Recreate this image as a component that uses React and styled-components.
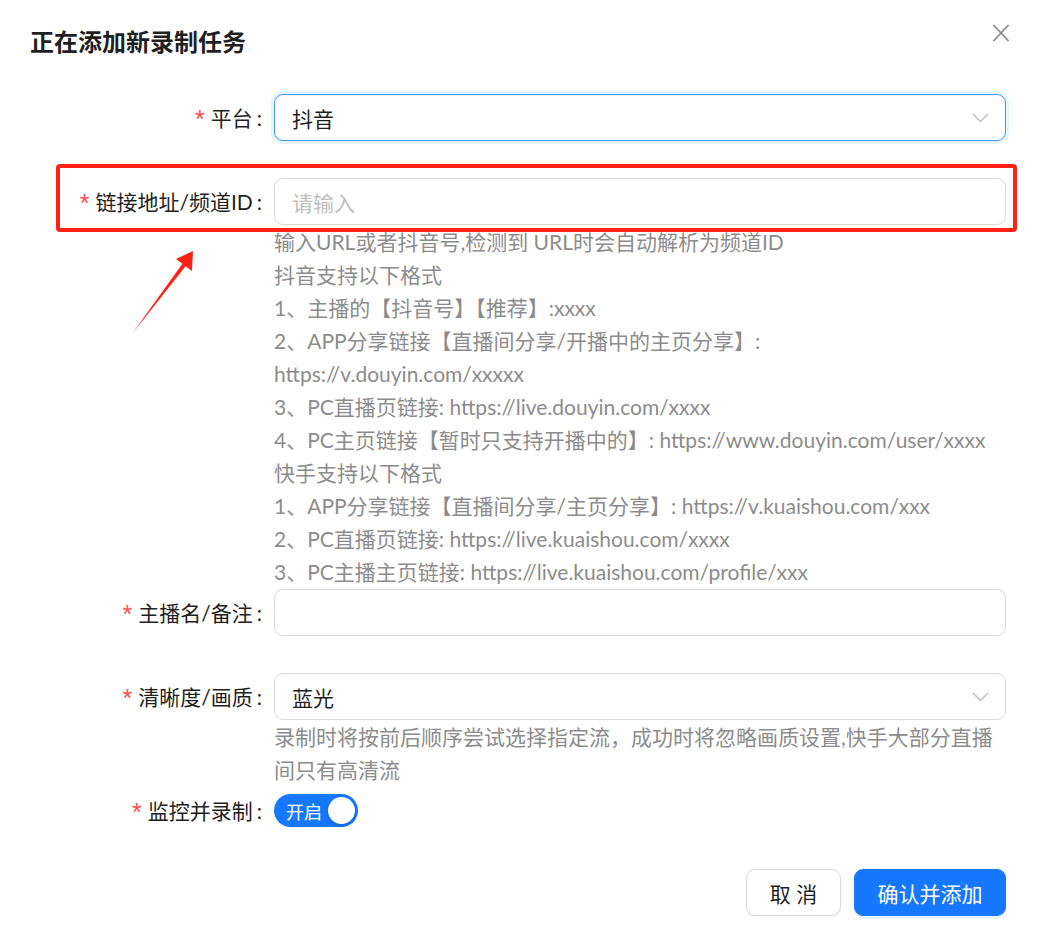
import styled, { createGlobalStyle } from "styled-components";

const GlobalStyle = createGlobalStyle`
  html, body {
    margin: 0;
    padding: 0;
    background: #ffffff;
  }
  body {
    font-family: Lato, "Noto Sans CJK SC", sans-serif;
    color: #1f1f1f;
  }
`;

const Page = styled.div`
  position: relative;
  width: 1041px;
  min-height: 942px;
  box-sizing: border-box;
  padding: 24px 35px 0 30px;
`;

const Header = styled.div`
  display: flex;
  justify-content: space-between;
  align-items: center;
  height: 36px;
`;

const Title = styled.h2`
  margin: 0;
  font-size: 24px;
  font-weight: 700;
  line-height: 36px;
  color: #1f1f1f;
`;

const CloseButton = styled.button`
  display: flex;
  align-items: center;
  justify-content: center;
  width: 28px;
  height: 28px;
  margin: -18px -9px 0 0;
  padding: 0;
  border: none;
  background: transparent;
  cursor: pointer;
`;

const Form = styled.form`
  margin-top: 34px;
  display: flex;
  flex-direction: column;
`;

const Item = styled.div`
  margin-bottom: ${(p) => p.$gap ?? 37}px;
`;

const Line = styled.div`
  position: relative;
  display: grid;
  grid-template-columns: 244px 1fr;
  align-items: center;
  min-height: 47px;
`;

const Label = styled.label`
  display: flex;
  align-items: center;
  justify-content: flex-end;
  padding-right: 12px;
  font-size: 21px;
  line-height: 33px;
  color: #1f1f1f;
  white-space: nowrap;
`;

const Star = styled.span`
  color: #ff4d4f;
  font-family: "Liberation Sans", sans-serif;
  font-size: 25px;
  margin-right: 6px;
  line-height: 1;
  position: relative;
  top: 2px;
`;

const Colon = styled.span`
  margin-left: 4px;
`;

const Field = styled.div`
  display: flex;
  align-items: center;
  justify-content: space-between;
  box-sizing: border-box;
  height: 47px;
  padding: 0 16px 0 17px;
  border: 1px solid ${(p) => (p.$focused ? "#4096ff" : "#d9d9d9")};
  border-radius: 9px;
  box-shadow: ${(p) => (p.$focused ? "0 0 0 3px rgba(5, 145, 255, 0.1)" : "none")};
  background: #ffffff;
  font-size: 21px;
  color: ${(p) => (p.$placeholder ? "#bfbfbf" : "#1f1f1f")};
`;

const Help = styled.div`
  grid-column: 2;
  font-size: 21px;
  line-height: 33px;
  color: #8c8c8c;
`;

const HelpGrid = styled.div`
  display: grid;
  grid-template-columns: 244px 1fr;
`;

const Switch = styled.div`
  display: flex;
  align-items: center;
  justify-content: space-between;
  box-sizing: border-box;
  width: 84px;
  height: 33px;
  padding: 0 3px 0 12px;
  border-radius: 17px;
  background: #1677ff;
  color: #ffffff;
  font-size: 18px;
`;

const Knob = styled.span`
  width: 27px;
  height: 27px;
  border-radius: 50%;
  background: #ffffff;
  box-shadow: 0 2px 4px rgba(0, 35, 11, 0.2);
`;

const Footer = styled.div`
  display: flex;
  justify-content: flex-end;
  gap: 13px;
`;

const Button = styled.button`
  box-sizing: border-box;
  height: 47px;
  padding: 0;
  border-radius: 9px;
  font-family: inherit;
  font-size: 21px;
  cursor: pointer;
  border: 1px solid ${(p) => (p.$primary ? "#1677ff" : "#d9d9d9")};
  background: ${(p) => (p.$primary ? "#1677ff" : "#ffffff")};
  color: ${(p) => (p.$primary ? "#ffffff" : "#1f1f1f")};
  box-shadow: ${(p) =>
    p.$primary ? "0 3px 0 rgba(5, 145, 255, 0.1)" : "0 3px 0 rgba(0, 0, 0, 0.02)"};
  width: ${(p) => p.$w}px;
`;

const Highlight = styled.div`
  position: absolute;
  top: -14px;
  left: 26px;
  right: -11px;
  bottom: -7px;
  border: 4px solid #fe2216;
  border-radius: 4px;
  pointer-events: none;
`;

const Arrow = styled.svg`
  position: absolute;
  left: 0;
  top: 0;
  pointer-events: none;
`;

const Chevron = () => (
  <svg width="17" height="10" viewBox="0 0 17 10">
    <path d="M1 1 L8.5 8.5 L16 1" fill="none" stroke="#bfbfbf" strokeWidth="1.5" />
  </svg>
);

const ReqLabel = ({ children }) => (
  <Label>
    <Star>*</Star>
    {children}
    <Colon>:</Colon>
  </Label>
);

const douyinHelp = [
  "输入URL或者抖音号,检测到 URL时会自动解析为频道ID",
  "抖音支持以下格式",
  "1、主播的【抖音号】【推荐】:xxxx",
  "2、APP分享链接【直播间分享/开播中的主页分享】:",
  "https://v.douyin.com/xxxxx",
  "3、PC直播页链接: https://live.douyin.com/xxxx",
  "4、PC主页链接【暂时只支持开播中的】: https://www.douyin.com/user/xxxx",
  "快手支持以下格式",
  "1、APP分享链接【直播间分享/主页分享】: https://v.kuaishou.com/xxx",
  "2、PC直播页链接: https://live.kuaishou.com/xxxx",
  "3、PC主播主页链接: https://live.kuaishou.com/profile/xxx",
];

export default function App() {
  return (
    <Page>
      <GlobalStyle />
      <Header>
        <Title>正在添加新录制任务</Title>
        <CloseButton type="button" aria-label="close">
          <svg width="18" height="18" viewBox="0 0 18 18">
            <path d="M1.5 1 L16.5 17 M16.5 1 L1.5 17" stroke="#8c8c8c" strokeWidth="1.8" />
          </svg>
        </CloseButton>
      </Header>

      <Form>
        <Item>
          <Line>
            <ReqLabel>平台</ReqLabel>
            <Field $focused>
              <span>抖音</span>
              <Chevron />
            </Field>
          </Line>
        </Item>

        <Item $gap={1}>
          <Line>
            <Highlight />
            <ReqLabel>链接地址/频道ID</ReqLabel>
            <Field $placeholder>请输入</Field>
          </Line>
          <HelpGrid>
            <Help>
              {douyinHelp.map((t) => (
                <div key={t}>{t}</div>
              ))}
            </Help>
          </HelpGrid>
        </Item>

        <Item>
          <Line>
            <ReqLabel>主播名/备注</ReqLabel>
            <Field />
          </Line>
        </Item>

        <Item $gap={1}>
          <Line>
            <ReqLabel>清晰度/画质</ReqLabel>
            <Field>
              <span>蓝光</span>
              <Chevron />
            </Field>
          </Line>
          <HelpGrid>
            <Help>录制时将按前后顺序尝试选择指定流，成功时将忽略画质设置,快手大部分直播间只有高清流</Help>
          </HelpGrid>
        </Item>

        <Item $gap={35}>
          <Line>
            <ReqLabel>监控并录制</ReqLabel>
            <div>
              <Switch>
                <span>开启</span>
                <Knob />
              </Switch>
            </div>
          </Line>
        </Item>
      </Form>

      <Footer>
        <Button type="button" $w={95}>取 消</Button>
        <Button type="button" $primary $w={152}>确认并添加</Button>
      </Footer>

      <Arrow width="1041" height="942" viewBox="0 0 1041 942">
        <polygon
          points="132,334 182.4,263.8 176,259 193,251 192,271 185.6,266.2"
          fill="#fe2216"
        />
      </Arrow>
    </Page>
  );
}
